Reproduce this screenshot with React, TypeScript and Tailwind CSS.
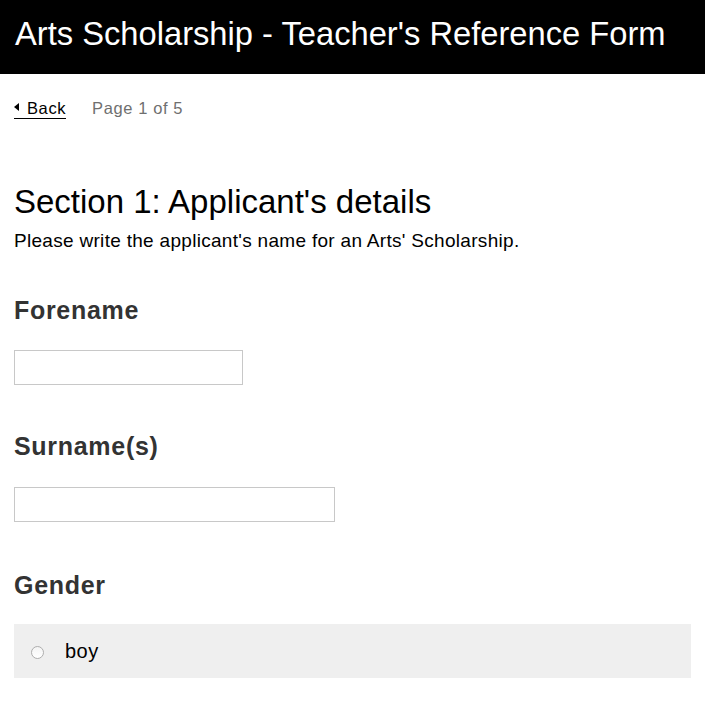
export default function App() {
  return (
    <div className="min-h-screen bg-white font-['Liberation_Sans',Arial,sans-serif] text-black">
      <header className="h-[74px] bg-black px-[15px] pt-[17px]">
        <h1 className="text-[32.7px] leading-[33px] text-white">Arts Scholarship - Teacher's Reference Form</h1>
      </header>

      <main className="px-[14px]">
        <nav className="mt-[24px] flex items-start gap-[26px] text-[16.5px] leading-[20px] tracking-[0.6px]">
          <a href="#" className="flex items-center gap-[8px] border-b border-black">
            <svg width="5" height="8" viewBox="0 0 5 8" className="mt-[-3px]">
              <path d="M5 0 L0 4 L5 8 Z" fill="#000" />
            </svg>
            Back
          </a>
          <span className="text-[#6f6f6f]">Page 1 of 5</span>
        </nav>

        <h2 className="mt-[64px] text-[33px] leading-[38px]">Section 1: Applicant's details</h2>
        <p className="mt-[9px] text-[19px] leading-[22px] tracking-[0.3px]">
          Please write the applicant's name for an Arts' Scholarship.
        </p>

        <label className="mt-[43px] block text-[25px] font-bold leading-[30px] tracking-[0.7px] text-[#333]">
          Forename
        </label>
        <input className="mt-[25px] block h-[35px] w-[229px] border border-[#c8c8c8] px-2 outline-none" />

        <label className="mt-[46px] block text-[25px] font-bold leading-[30px] tracking-[0.7px] text-[#333]">
          Surname(s)
        </label>
        <input className="mt-[26px] block h-[35px] w-[321px] border border-[#c8c8c8] px-2 outline-none" />

        <div className="mt-[48px] text-[25px] font-bold leading-[30px] tracking-[0.7px] text-[#333]">Gender</div>
        <label className="mt-[24px] flex h-[54px] items-center gap-[21px] bg-[#efefef] px-[17px] text-[20px] tracking-[0.5px]">
          <span className="mt-[3px] h-[13px] w-[13px] rounded-full border border-[#aeaeae] bg-gradient-to-b from-[#f4f4f4] to-white" />
          <span>boy</span>
        </label>
      </main>
    </div>
  );
}
